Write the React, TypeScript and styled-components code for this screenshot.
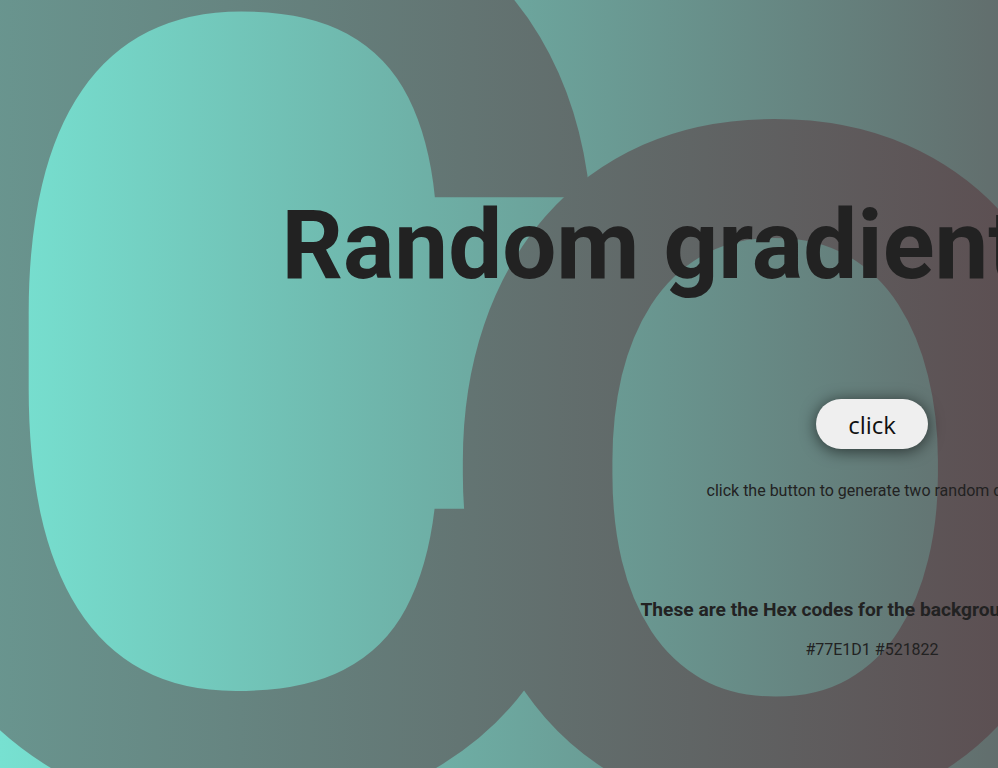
import React from 'react';
import styled, { createGlobalStyle } from 'styled-components';

const Global = createGlobalStyle`
  html, body { margin: 0; padding: 0; overflow: hidden; }
  body { font-family: Roboto, "Liberation Sans", sans-serif; color: #222; }
`;

const Page = styled.div`
  position: relative;
  width: 1744px;
  height: 768px;
  overflow: hidden;
  background: linear-gradient(90deg, #77e1d1, #521822);
`;

const Backdrop = styled.span`
  position: absolute;
  left: -191px;
  top: -267px;
  padding-right: 800px;
  font: 500 1271px/1 Roboto, sans-serif;
  letter-spacing: -224px;
  white-space: nowrap;
  background-image: linear-gradient(90deg, #77e1d1, #521822);
  background-size: 2915px 100%;
  background-position: -917px 0;
  background-repeat: no-repeat;
  -webkit-background-clip: text;
  background-clip: text;
  color: transparent;
  pointer-events: none;
  user-select: none;
`;

const Content = styled.main`
  position: relative;
  z-index: 1;
  display: flex;
  flex-direction: column;
  align-items: center;
  padding-top: 189px;
`;

const Title = styled.h1`
  margin: 0;
  font-family: Roboto, sans-serif;
  font-weight: 700;
  font-size: 96px;
  line-height: 112px;
  color: #222;
  white-space: nowrap;
`;

const ClickButton = styled.button`
  margin-top: 98px;
  width: 112px;
  height: 50px;
  border: none;
  border-radius: 25px;
  background: #efefef;
  color: #111;
  font-family: "Open Sans", "Noto Sans", sans-serif;
  font-size: 24px;
  box-shadow: 0 2px 16px rgba(0, 0, 0, 0.6);
  cursor: pointer;
`;

const Text = styled.p<{ $bold?: boolean; $size?: number; $gap: number }>`
  margin: ${(p) => p.$gap}px 0 0;
  font-family: Roboto, sans-serif;
  font-size: ${(p) => p.$size ?? 16}px;
  font-weight: ${(p) => (p.$bold ? 700 : 400)};
  line-height: 20px;
  color: #222;
  white-space: nowrap;
`;

export default function App() {
  return (
    <>
      <Global />
      <Page>
        <Backdrop aria-hidden>Co</Backdrop>
        <Content>
          <Title>Random gradient generator</Title>
          <ClickButton>click</ClickButton>
          <Text $gap={32}>click the button to generate two random colors</Text>
          <Text $bold $size={19.2} $gap={99}>These are the Hex codes for the background gradient:</Text>
          <Text $gap={20}>#77E1D1 #521822</Text>
        </Content>
      </Page>
    </>
  );
}
